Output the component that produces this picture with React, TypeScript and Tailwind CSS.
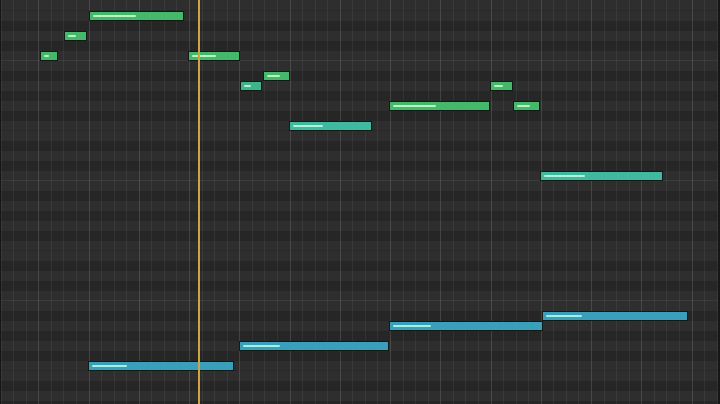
import React from 'react';

type Note = {
  x1: number;
  x2: number;
  y: number;
  hl: number;
  tone: 'green' | 'mint' | 'teal' | 'blue';
};

const NOTES: Note[] = [
  { x1: 40, x2: 58, y: 51, hl: 5, tone: 'green' },
  { x1: 64, x2: 87, y: 31, hl: 8, tone: 'green' },
  { x1: 89, x2: 184, y: 11, hl: 43, tone: 'green' },
  { x1: 188, x2: 240, y: 51, hl: 24, tone: 'green' },
  { x1: 240, x2: 262, y: 81, hl: 7, tone: 'mint' },
  { x1: 263, x2: 290, y: 71, hl: 13, tone: 'green' },
  { x1: 289, x2: 372, y: 121, hl: 30, tone: 'teal' },
  { x1: 389, x2: 490, y: 101, hl: 43, tone: 'green' },
  { x1: 490, x2: 513, y: 81, hl: 9, tone: 'green' },
  { x1: 513, x2: 540, y: 101, hl: 13, tone: 'green' },
  { x1: 540, x2: 663, y: 171, hl: 41, tone: 'teal' },
  { x1: 542, x2: 688, y: 311, hl: 36, tone: 'blue' },
  { x1: 389, x2: 543, y: 321, hl: 38, tone: 'blue' },
  { x1: 239, x2: 389, y: 341, hl: 37, tone: 'blue' },
  { x1: 88, x2: 234, y: 361, hl: 35, tone: 'blue' },
];

const TONES = {
  green: { body: 'bg-[#46b86c]', line: 'bg-[#b6f5c0]' },
  mint: { body: 'bg-[#3fb38c]', line: 'bg-[#b0f3d0]' },
  teal: { body: 'bg-[#41b8a0]', line: 'bg-[#aef2dc]' },
  blue: { body: 'bg-[#3a9fbb]', line: 'bg-[#a4f0e4]' },
};

// row 17 (top 171) is a C, pitch goes up toward the top
const BLACK = [1, 3, 6, 8, 10];
const rows = Array.from({ length: 41 }, (_, k) => {
  const pc = (((17 - k) % 12) + 12) % 12;
  return { k, pc };
});

const cols = Array.from({ length: 58 }, (_, j) => j);

export default function App() {
  return (
    <div className="relative w-[720px] h-[404px] overflow-hidden bg-[#2d2d2d]">
      {/* key rows */}
      <div className="flex flex-col pt-[1px]">
        {rows.map(({ k, pc }) => {
          const black = BLACK.includes(pc);
          let edge = '';
          if (pc === 0) edge = 'border-b border-[#3b3b3b]';
          else if (pc === 5) edge = 'border-b border-[#282828]';
          return (
            <div
              key={k}
              className={`h-[10px] shrink-0 box-border ${black ? 'bg-[#262626]' : 'bg-[#2e2e2e]'} ${edge}`}
            />
          );
        })}
      </div>

      {/* grid columns */}
      <div className="absolute inset-0 flex pl-[0.6px]">
        {cols.map((j) => (
          <div
            key={j}
            className={`w-[12.565px] shrink-0 h-full border-l ${
              j % 4 === 3 ? 'border-[#ffffff21]' : 'border-[#ffffff0f]'
            }`}
          />
        ))}
      </div>

      {/* notes */}
      {NOTES.map((n, i) => (
        <div
          key={i}
          className={`absolute h-[10px] border border-[#0f1c16] flex items-center ${TONES[n.tone].body}`}
          style={{ left: n.x1, top: n.y, width: n.x2 - n.x1 }}
        >
          <div
            className={`ml-[3px] h-[2px] rounded-full ${TONES[n.tone].line}`}
            style={{ width: n.hl }}
          />
        </div>
      ))}

      {/* playhead */}
      <div className="absolute top-0 bottom-0 left-[198px] w-[2px] bg-[#cfa447]" />

      {/* edges */}
      <div className="absolute top-0 bottom-0 left-0 w-[1px] bg-[#161616]" />
      <div className="absolute top-0 bottom-0 right-0 w-[2px] bg-[#161616]" />
    </div>
  );
}
